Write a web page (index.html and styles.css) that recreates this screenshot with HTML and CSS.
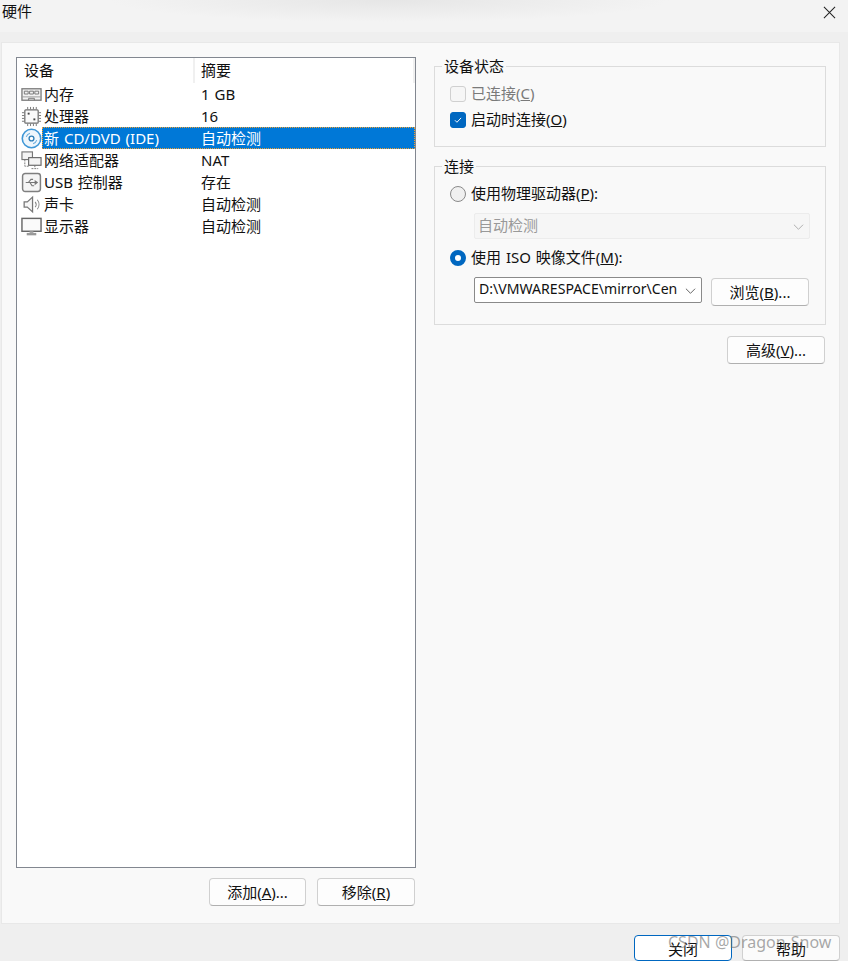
FILE: index.html
```html
<!DOCTYPE html>
<html lang="zh-CN">
<head>
<meta charset="utf-8">
<title>硬件</title>
<link rel="stylesheet" href="styles.css">
</head>
<body>
<div class="dialog">
  <header class="titlebar">
    <span class="title">硬件</span>
    <svg class="close" viewBox="0 0 14 14"><path d="M1 1L13 13M13 1L1 13"/></svg>
  </header>
  <main class="panel">
    <section class="left">
      <div class="list">
        <div class="list-head"><span class="h1">设备</span><span class="h2">摘要</span></div>
        <div class="row"><svg class="ico" viewBox="0 0 22 18"><rect x="1" y="3" width="20" height="12" fill="#f2f2f2" stroke="#7d7d7d" stroke-width="1.400"/><path d="M3.500 5.500h4v3h-4zM9 5.500h4v3h-4zM14.500 5.500h4v3h-4z" fill="none" stroke="#777"/><path d="M1 11.500h20" stroke="#999"/><path d="M8 15v-2h6v2" fill="none" stroke="#777"/></svg><div class="cell"><span class="name">内存</span><span class="val">1 GB</span></div></div>
        <div class="row"><svg class="ico" viewBox="0 0 22 22"><rect x="4" y="4" width="14" height="14" rx="1" fill="#fafafa" stroke="#6f6f6f" stroke-width="1.300"/><path d="M7 1v2.500M10 1v2.500M13 1v2.500M16 1v2.500M7 18.500V21M10 18.500V21M13 18.500V21M16 18.500V21M1 7h2.500M1 10h2.500M1 13h2.500M1 16h2.500M18.500 7H21M18.500 10H21M18.500 13H21M18.500 16H21" stroke="#777"/><rect x="7" y="7" width="2" height="2" fill="#444"/><rect x="13" y="13" width="2" height="2" fill="#444"/></svg><div class="cell"><span class="name">处理器</span><span class="val">16</span></div></div>
        <div class="row sel"><svg class="ico" viewBox="0 0 20 20"><circle cx="10" cy="10" r="8.800" fill="#eef6fc" stroke="#3f97d6" stroke-width="1.500"/><path d="M5 8.500A5.500 5.500 0 0 1 8.500 5M15 11.500A5.500 5.500 0 0 1 11.500 15" fill="none" stroke="#6aaedd"/><circle cx="10" cy="10" r="2.300" fill="#fff" stroke="#2f7fb8" stroke-width="1.300"/></svg><div class="cell"><span class="name">新 CD/DVD (IDE)</span><span class="val">自动检测</span></div></div>
        <div class="row"><svg class="ico" viewBox="0 0 22 20"><rect x="1" y="1" width="11" height="8" fill="#f4f4f4" stroke="#777" stroke-width="1.200"/><rect x="8" y="7" width="13" height="8" fill="#f4f4f4" stroke="#666" stroke-width="1.200"/><path d="M14.500 15v3M11 18.500h7M4 9v7h4" fill="none" stroke="#777" stroke-dasharray="2 1"/></svg><div class="cell"><span class="name">网络适配器</span><span class="val">NAT</span></div></div>
        <div class="row"><svg class="ico" viewBox="0 0 20 20"><rect x="1.500" y="1.500" width="17" height="17" rx="2.500" fill="#f5f5f5" stroke="#7f7f7f" stroke-width="1.400"/><path d="M4.500 10h11M15.500 10l-2-1.500v3zM7 10l2.500-3h2M8.500 10l2 3h2" fill="none" stroke="#777"/></svg><div class="cell"><span class="name">USB 控制器</span><span class="val">存在</span></div></div>
        <div class="row"><svg class="ico" viewBox="0 0 20 20"><path d="M3 7.500h3L11 3v14l-5-4.500H3z" fill="#f6f6f6" stroke="#777" stroke-width="1.200"/><path d="M13.500 7.500a4 4 0 0 1 0 5M15.500 5.500a7 7 0 0 1 0 9" fill="none" stroke="#888"/></svg><div class="cell"><span class="name">声卡</span><span class="val">自动检测</span></div></div>
        <div class="row"><svg class="ico" viewBox="0 0 22 20"><rect x="1" y="1.500" width="20" height="13.500" fill="#fafafa" stroke="#666" stroke-width="1.500"/><path d="M6 18h10" stroke="#999" stroke-width="2.500"/><path d="M9 15h4v2H9z" fill="#aaa"/></svg><div class="cell"><span class="name">显示器</span><span class="val">自动检测</span></div></div>
      </div>
      <div class="actions">
        <button class="btn add">添加(<u>A</u>)...</button>
        <button class="btn">移除(<u>R</u>)</button>
      </div>
    </section>
    <section class="right">
      <fieldset class="group status">
        <legend>设备状态</legend>
        <label class="opt off"><span class="box"></span><span>已连接(<u>C</u>)</span></label>
        <label class="opt"><span class="box on"><svg viewBox="0 0 16 16"><path d="M4.500 8.300l2.300 2.300 4.700-5"/></svg></span><span>启动时连接(<u>O</u>)</span></label>
      </fieldset>
      <fieldset class="group conn">
        <legend>连接</legend>
        <label class="opt"><span class="radio"></span><span>使用物理驱动器(<u>P</u>):</span></label>
        <div class="select dis">自动检测<svg class="chev" viewBox="0 0 12 8"><path d="M1 1.500l5 5 5-5"/></svg></div>
        <label class="opt iso"><span class="radio on"></span><span>使用 ISO 映像文件(<u>M</u>):</span></label>
        <div class="file-row">
          <div class="select file">D:\VMWARESPACE\mirror\Cen<svg class="chev" viewBox="0 0 12 8"><path d="M1 1.500l5 5 5-5"/></svg></div>
          <button class="btn browse">浏览(<u>B</u>)...</button>
        </div>
      </fieldset>
      <div class="adv"><button class="btn">高级(<u>V</u>)...</button></div>
    </section>
  </main>
  <footer class="footer">
    <button class="btn fbtn primary">关闭</button>
    <button class="btn fbtn">帮助</button>
  </footer>
  <div class="watermark">CSDN @Dragon-Snow</div>
</div>
</body>
</html>
```
FILE: styles.css
```css
* { box-sizing: border-box; }
html, body { margin: 0; height: 100%; overflow: hidden; }
body {
  font-family: "Noto Sans", "Noto Sans CJK SC", sans-serif;
  font-size: 15px;
  word-spacing: 1px;
  color: #111;
  background: #efefef;
}
.dialog {
  position: relative;
  width: 848px;
  height: 961px;
  overflow: hidden;
  display: flex;
  flex-direction: column;
}
.titlebar {
  height: 32px;
  flex: none;
  margin-bottom: 10px;
  padding: 0 12px 0 2px;
  display: flex;
  justify-content: space-between;
  align-items: flex-start;
  background: radial-gradient(ellipse 280px 22px at 390px 0, #e6e6e6, #f3f3f3 100%) #f3f3f3;
}
.title { font-size: 15px; line-height: 22px; }
.close { width: 13px; height: 13px; margin-top: 6px; fill: none; stroke: #222; stroke-width: 1.100; }
.panel {
  width: 839px;
  height: 882px;
  flex: none;
  margin-left: 1px;
  padding: 14px 0 0 14px;
  display: flex;
  background: #f9f9f9;
  border: 1px solid #e8e8e8;
}
.left { width: 400px; flex: none; }
.list {
  height: 811px;
  background: #fff;
  border: 1px solid #828790;
}
.list-head {
  height: 25px;
  display: flex;
  align-items: center;
  line-height: 25px;
}
.h1 { width: 178px; padding-left: 7px; border-right: 2px solid #f0f0f0; height: 25px; }
.h2 { padding-left: 6px; flex: 1; border-right: 2px solid #f0f0f0; height: 25px; }
.row { height: 22px; display: flex; align-items: center; }
.ico { width: 21px; height: 21px; margin-left: 4px; flex: none; }
.cell {
  flex: 1;
  height: 22px;
  display: flex;
  line-height: 20px;
  padding-left: 2px;
  border: 1px dotted transparent;
  border-width: 1px 0;
}
.name { width: 157px; flex: none; white-space: nowrap; }
.sel .cell {
  background: #0078d7;
  color: #fff;
  border: 1px dotted #f0a030;
  padding-left: 1px;
}
.actions {
  display: flex;
  justify-content: flex-end;
  gap: 11px;
  padding: 10px 1px 0 0;
}
.btn {
  font: inherit;
  word-spacing: inherit;
  color: #111;
  height: 28px;
  width: 98px;
  padding: 0 0 2px;
  background: #fdfdfd;
  border: 1px solid #d0d0d0;
  border-bottom-color: #b0b0b0;
  border-radius: 4px;
}
.add { width: 97px; }
.right { width: 392px; margin-left: 18px; flex: none; }
.group {
  margin: 0;
  padding: 0 0 0 15px;
  border: 1px solid #dcdcdc;
  min-width: 0;
}
.group legend { padding: 0 2px; margin-left: -8px; line-height: 20px; height: 20px; }
.status { height: 91px; margin-top: -1px; }
.conn { height: 169px; margin-top: 9px; }
.opt {
  display: flex;
  align-items: flex-start;
  height: 26px;
  line-height: 25px;
  white-space: pre;
}
.status .opt:first-of-type { margin-top: 5px; }
.conn .opt:first-of-type { margin-top: 5px; }
.off { color: #7a7a7a; }
.box, .radio {
  width: 16px;
  height: 16px;
  flex: none;
  margin: 5px 5px 0 0;
  border: 1px solid #d0d0d0;
  background: #f6f6f6;
}
.box { border-radius: 3px; }
.box.on { background: #0067c0; border-color: #0067c0; padding: 0; }
.box svg { display: block; width: 14px; height: 14px; fill: none; stroke: #fff; stroke-width: 1.100; }
.radio { border-radius: 50%; border-color: #8a8a8a; background: #f0f0f0; }
.radio.on { border: 5px solid #0067c0; background: #fff; }
.select {
  position: relative;
  margin-left: 24px;
  width: 336px;
  height: 26px;
  line-height: 22px;
  padding-left: 3px;
  border: 1px solid #ececec;
  border-radius: 2px;
  background: #f6f6f6;
  color: #999;
}
.select.dis { margin-top: 6px; }
.iso { margin-top: 6px; }
.chev {
  width: 11px;
  height: 8px;
  fill: none;
  stroke: #aaa;
  stroke-width: 1;
  position: absolute;
  right: 5px;
  top: 9px;
}
.file-row { display: flex; align-items: flex-start; margin-top: 6px; }
.file {
  width: 228px;
  margin-left: 24px;
  padding-left: 4px;
  font-size: 14.100px;
  color: #111;
  background: #fff;
  border-color: #8a8a8a;
  white-space: nowrap;
  overflow: hidden;
}
.file .chev { stroke: #555; }
.browse { margin: 1px 0 0 9px; }
.adv { display: flex; justify-content: flex-end; padding: 11px 1px 0 0; }
.footer {
  flex: none;
  display: flex;
  justify-content: flex-end;
  gap: 10px;
  padding: 11px 8px 0 0;
}
.fbtn { height: 26px; padding: 0; background: #fbfbfb; }
.primary { border: 1px solid #0067c0; background: #fff; }
.watermark {
  position: absolute;
  left: 668px;
  top: 932px;
  font-family: "Noto Sans", sans-serif;
  font-size: 16px;
  word-spacing: 0;
  line-height: 20px;
  color: rgba(110, 110, 110, 0.6);
  white-space: nowrap;
  pointer-events: none;
}
```
